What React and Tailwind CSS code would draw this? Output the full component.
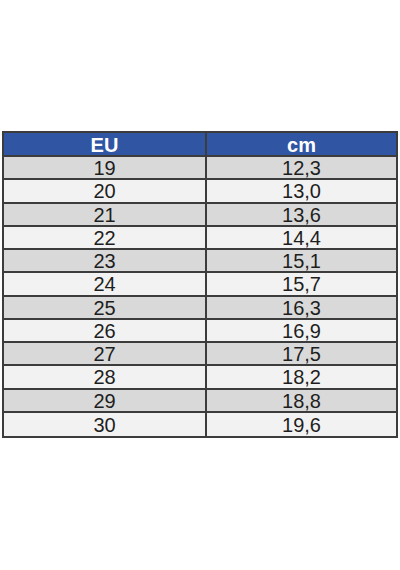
const rows = [
  ["19", "12,3"],
  ["20", "13,0"],
  ["21", "13,6"],
  ["22", "14,4"],
  ["23", "15,1"],
  ["24", "15,7"],
  ["25", "16,3"],
  ["26", "16,9"],
  ["27", "17,5"],
  ["28", "18,2"],
  ["29", "18,8"],
  ["30", "19,6"],
];

export default function App() {
  return (
    <div className="w-[400px] h-[570px] bg-white pt-[131px] px-[2px]" style={{ fontFamily: '"Liberation Sans", Arial, sans-serif' }}>
      <div className="w-[396px] border-2 border-[#3c3c3c]">
        <div className="grid grid-cols-[203px_1fr] h-[24px] bg-[#2f55a3] border-b-2 border-[#3c3c3c] text-white font-bold text-[20px] leading-none">
          <div className="flex items-center justify-center border-r-2 border-[#3c3c3c] pt-px">EU</div>
          <div className="flex items-center justify-center pt-px">cm</div>
        </div>
        {rows.map(([eu, cm], i) => (
          <div
            key={eu}
            className={`grid grid-cols-[203px_1fr] h-[23.25px] text-[20px] leading-none text-[#1e1e1e] ${i % 2 === 0 ? "bg-[#d9d9d9]" : "bg-[#f2f2f2]"} ${i < rows.length - 1 ? "border-b-2 border-[#3c3c3c]" : ""}`}
          >
            <div className="flex items-center justify-center border-r-2 border-[#3c3c3c] pt-px">{eu}</div>
            <div className="flex items-center justify-center pt-px">{cm}</div>
          </div>
        ))}
      </div>
    </div>
  );
}
